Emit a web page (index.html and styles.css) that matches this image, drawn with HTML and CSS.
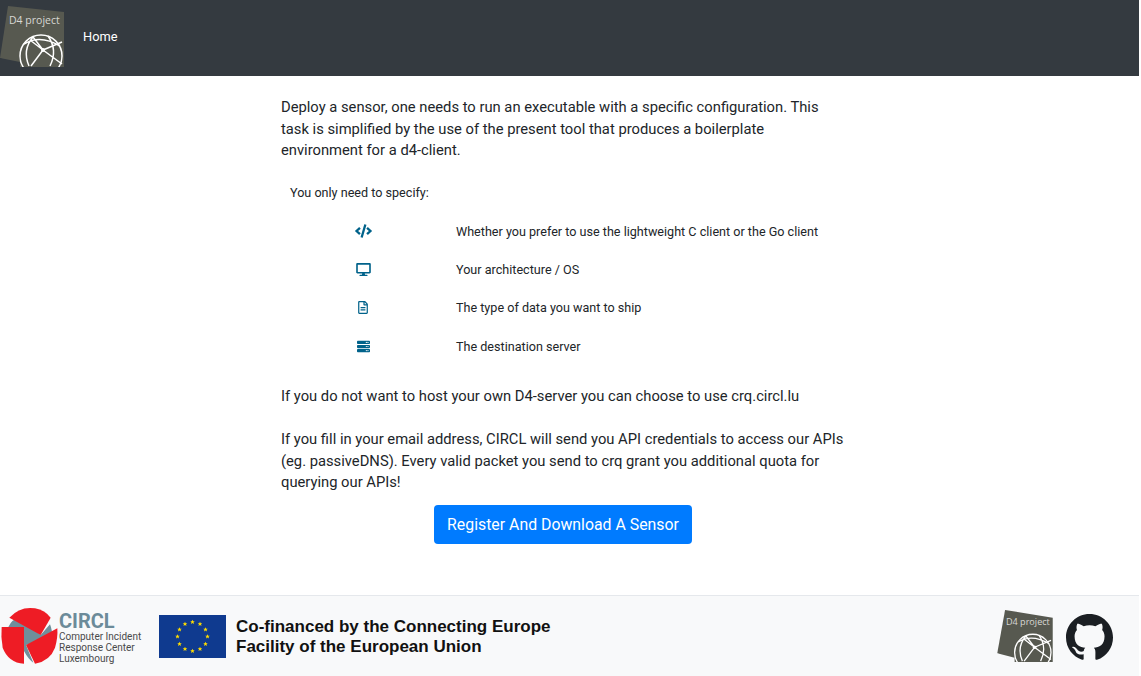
FILE: index.html
```html
<!DOCTYPE html>
<html>
<head>
    <title>D4 project</title>
    <link rel="stylesheet" href="styles.css">
</head>
<body>
    <nav class="navbar">
        <svg class="d4-logo" viewBox="0 0 64 67" width="64" height="67">
            <polygon points="8,6 64,12 64,67 20,67 0,58" fill="#575950"/>
            <polygon points="0,58 20,62 20,67 0,67" fill="#343a40"/>
            <text x="9" y="24" class="d4-text">D4 project</text>
            <g class="globe">
                <circle cx="41" cy="56" r="21"/>
                <path d="M33 37 Q22 50 29 66 M48 36 Q58 50 50 66 M24 44 Q40 34 60 46 M33 37 L43 50 L62 64 M43 50 L62 42 M43 50 L31 66 M43 50 L30 40"/>
            </g>
            <circle cx="43" cy="50" r="2" fill="#fff"/>
        </svg>
        <a class="nav-link" href="#">Home</a>
    </nav>

    <main class="content">
        <div class="column">
            <p class="lead">Deploy a sensor, one needs to run an executable with a specific configuration. This task is simplified by the use of the present tool that produces a boilerplate environment for a d4-client.</p>
            <p class="specify">You only need to specify:</p>
            <div class="features">
                <div class="feature">
                    <svg class="icon" viewBox="0 0 640 512" width="17" height="14"><path d="M278.9 511.5l-61-17.7c-6.4-1.8-10-8.5-8.2-14.9L346.2 8.7c1.8-6.4 8.5-10 14.9-8.2l61 17.7c6.4 1.8 10 8.5 8.2 14.9L293.8 503.3c-1.9 6.4-8.5 10.1-14.9 8.2zm-114-112.2l43.5-46.4c4.6-4.9 4.3-12.7-.8-17.2L117 256l90.6-79.7c5.1-4.5 5.5-12.3.8-17.2l-43.5-46.4c-4.5-4.8-12.1-5.1-17-.5L3.8 247.2c-5.1 4.7-5.1 12.8 0 17.5l144.1 135.1c4.9 4.6 12.5 4.4 17-.5zm327.2.6l144.1-135.1c5.1-4.7 5.1-12.8 0-17.5L492.1 112.1c-4.8-4.5-12.4-4.3-17 .5L431.6 159c-4.6 4.9-4.3 12.7.8 17.2L523 256l-90.6 79.7c-5.1 4.5-5.5 12.3-.8 17.2l43.5 46.4c4.5 4.9 12.1 5.1 17 .6z"/></svg>
                    <span>Whether you prefer to use the lightweight C client or the Go client</span>
                </div>
                <div class="feature">
                    <svg class="icon" viewBox="0 0 576 512" width="15" height="13"><path d="M528 0H48C21.5 0 0 21.5 0 48v320c0 26.5 21.5 48 48 48h192l-16 48h-72c-13.3 0-24 10.7-24 24s10.7 24 24 24h272c13.3 0 24-10.7 24-24s-10.7-24-24-24h-72l-16-48h192c26.5 0 48-21.5 48-48V48c0-26.5-21.5-48-48-48zm-16 352H64V64h448v288z"/></svg>
                    <span>Your architecture / OS</span>
                </div>
                <div class="feature">
                    <svg class="icon" viewBox="0 0 384 512" width="10" height="13"><path d="M288 248v28c0 6.6-5.4 12-12 12H108c-6.6 0-12-5.4-12-12v-28c0-6.6 5.4-12 12-12h168c6.6 0 12 5.4 12 12zm-12 72H108c-6.6 0-12 5.4-12 12v28c0 6.6 5.4 12 12 12h168c6.6 0 12-5.4 12-12v-28c0-6.6-5.4-12-12-12zm108-188.1V464c0 26.5-21.5 48-48 48H48c-26.5 0-48-21.5-48-48V48C0 21.5 21.5 0 48 0h204.1C264.8 0 277 5.1 286 14.1L369.9 98c9 8.9 14.1 21.2 14.1 33.9zm-128-80V128h76.1L256 51.9zM336 464V176H232c-13.3 0-24-10.7-24-24V48H48v416h288z"/></svg>
                    <span>The type of data you want to ship</span>
                </div>
                <div class="feature">
                    <svg class="icon" viewBox="0 0 512 512" width="13" height="13"><path d="M480 160H32c-17.673 0-32-14.327-32-32V64c0-17.673 14.327-32 32-32h448c17.673 0 32 14.327 32 32v64c0 17.673-14.327 32-32 32zm-48-88c-13.255 0-24 10.745-24 24s10.745 24 24 24 24-10.745 24-24-10.745-24-24-24zm-64 0c-13.255 0-24 10.745-24 24s10.745 24 24 24 24-10.745 24-24-10.745-24-24-24zm112 248H32c-17.673 0-32-14.327-32-32v-64c0-17.673 14.327-32 32-32h448c17.673 0 32 14.327 32 32v64c0 17.673-14.327 32-32 32zm-48-88c-13.255 0-24 10.745-24 24s10.745 24 24 24 24-10.745 24-24-10.745-24-24-24zm-64 0c-13.255 0-24 10.745-24 24s10.745 24 24 24 24-10.745 24-24-10.745-24-24-24zm112 248H32c-17.673 0-32-14.327-32-32v-64c0-17.673 14.327-32 32-32h448c17.673 0 32 14.327 32 32v64c0 17.673-14.327 32-32 32zm-48-88c-13.255 0-24 10.745-24 24s10.745 24 24 24 24-10.745 24-24-10.745-24-24-24zm-64 0c-13.255 0-24 10.745-24 24s10.745 24 24 24 24-10.745 24-24-10.745-24-24-24z"/></svg>
                    <span>The destination server</span>
                </div>
            </div>
            <p class="lead">If you do not want to host your own D4-server you can choose to use crq.circl.lu</p>
            <p class="lead last">If you fill in your email address, CIRCL will send you API credentials to access our APIs (eg. passiveDNS). Every valid packet you send to crq grant you additional quota for querying our APIs!</p>
            <div class="actions">
                <a class="btn" href="#">Register And Download A Sensor</a>
            </div>
        </div>
    </main>

    <footer class="footer">
        <div class="circl">
            <svg class="circl-mark" viewBox="0 35 180 180" width="60" height="60">
                <path fill="#6f8f9b" d="M25 98 Q35 75 60 68 L122 122 L150 90 Q158 110 155 125 L78 152 L100 205 Q85 195 72 170 L72 98 Z"/>
                <path fill="#ee1c25" d="M28 70 Q60 35 105 42 Q135 48 152 70 L122 122 Z"/>
                <path fill="#ee1c25" d="M5 98 L72 98 L72 208 Q25 205 8 160 Q2 130 5 98 Z"/>
                <path fill="#ee1c25" d="M172 102 L78 152 L105 208 Q150 200 165 160 Q174 130 172 102 Z"/>
            </svg>
            <div class="circl-text">
                <div class="circl-name">CIRCL</div>
                <div>Computer Incident</div>
                <div>Response Center</div>
                <div>Luxembourg</div>
            </div>
        </div>
        <svg class="eu-flag" viewBox="0 0 67 43" width="67" height="43">
            <defs>
                <polygon id="star" points="0,-2.3 .7,-.7 2.3,-.7 1.05,.35 1.5,1.95 0,1 -1.5,1.95 -1.05,.35 -2.3,-.7 -.7,-.7" fill="#ffdd00"/>
            </defs>
            <rect width="67" height="43" fill="#0f3a8f"/>
            <use href="#star" x="33.5" y="7"/>
            <use href="#star" x="41" y="9"/>
            <use href="#star" x="46.5" y="14.5"/>
            <use href="#star" x="48.5" y="21.5"/>
            <use href="#star" x="46.5" y="29"/>
            <use href="#star" x="41" y="34"/>
            <use href="#star" x="33.5" y="36"/>
            <use href="#star" x="26" y="34"/>
            <use href="#star" x="20.5" y="29"/>
            <use href="#star" x="18.5" y="21.5"/>
            <use href="#star" x="20.5" y="14.5"/>
            <use href="#star" x="26" y="9"/>
        </svg>
        <div class="cofinanced">Co-financed by the Connecting Europe<br>Facility of the European Union</div>
        <svg class="d4-logo-small" viewBox="0 0 64 60" width="56" height="52">
            <polygon points="9,0 64,9 64,60 20,60 0,50" fill="#575950"/>
            <polygon points="0,50 20,55 20,60 0,60" fill="#f8f9fa"/>
            <text x="10" y="17" class="d4-text">D4 project</text>
            <g class="globe">
                <circle cx="41" cy="49" r="21"/>
                <path d="M33 30 Q22 43 29 59 M48 29 Q58 43 50 59 M24 37 Q40 27 60 39 M33 30 L43 43 L62 57 M43 43 L62 35 M43 43 L31 59 M43 43 L30 33"/>
            </g>
            <circle cx="43" cy="43" r="2" fill="#fff"/>
        </svg>
        <svg class="github" viewBox="0 0 16 16" width="47" height="47"><path d="M8 0C3.58 0 0 3.58 0 8c0 3.54 2.29 6.53 5.47 7.59.4.07.55-.17.55-.38 0-.19-.01-.82-.01-1.49-2.01.37-2.53-.49-2.69-.94-.09-.23-.48-.94-.82-1.13-.28-.15-.68-.52-.01-.53.63-.01 1.08.58 1.23.82.72 1.21 1.87.87 2.33.66.07-.52.28-.87.51-1.07-1.78-.2-3.64-.89-3.64-3.95 0-.87.31-1.59.82-2.15-.08-.2-.36-1.02.08-2.12 0 0 .67-.21 2.2.82.64-.18 1.32-.27 2-.27.68 0 1.36.09 2 .27 1.53-1.04 2.2-.82 2.2-.82.44 1.1.16 1.92.08 2.12.51.56.82 1.27.82 2.15 0 3.07-1.87 3.75-3.65 3.95.29.25.54.73.54 1.48 0 1.07-.01 1.93-.01 2.2 0 .21.15.46.55.38A8.013 8.013 0 0016 8c0-4.42-3.58-8-8-8z"/></svg>
    </footer>
</body>
</html>
```

FILE: styles.css
```css
body {
    width: 1139px;
    margin: 0;
    font-family: Roboto, "Liberation Sans", sans-serif;
    color: #212529;
    background-color: #fff;
    overflow: hidden;
}
.navbar {
    display: flex;
    align-items: flex-start;
    height: 76px;
    background-color: #343a40;
}
.d4-logo {
    flex: none;
}
.d4-text {
    font-family: "Open Sans", sans-serif;
    font-size: 10.5px;
    fill: #d8d8d4;
}
.globe {
    fill: none;
    stroke: #fff;
    stroke-width: 1.5;
}
.nav-link {
    margin: 27px 0 0 19px;
    color: #fff;
    font-size: 12.8px;
    line-height: 19px;
    text-decoration: none;
}
.content {
    height: 519px;
    padding: 21px 0 0 281px;
    box-sizing: border-box;
}
.column {
    width: 564px;
}
.lead {
    margin: 0 0 21.5px;
    font-size: 14.75px;
    line-height: 21.5px;
}
.lead.last {
    margin-top: 22px;
    margin-bottom: 11px;
}
.specify {
    margin: 0 0 0 9px;
    font-size: 12.6px;
    line-height: 19px;
}
.features {
    margin: 10.2px 0 20.3px;
}
.feature {
    display: grid;
    grid-template-columns: 164px 1fr;
    align-items: center;
    height: 38.3px;
    padding-left: 11px;
    font-size: 12.6px;
}
.icon {
    justify-self: center;
    margin-left: -22px;
    fill: #00628a;
}
.actions {
    display: flex;
    justify-content: center;
}
.btn {
    padding: 9px 13.5px;
    color: #fff;
    background-color: #007bff;
    border-radius: 4px;
    font-size: 15.85px;
    line-height: 21px;
    text-decoration: none;
}
.footer {
    display: flex;
    align-items: center;
    height: 81px;
    box-sizing: border-box;
    border-top: 1px solid #e5e8ec;
    background-color: #f8f9fa;
}
.circl {
    display: flex;
    align-items: center;
    width: 159px;
    flex: none;
}
.circl-mark {
    flex: none;
}
.circl-text {
    margin: 2px 0 0 -1px;
    color: #4a4a4a;
    font-size: 10px;
    line-height: 11px;
}
.circl-name {
    color: #6c8b99;
    font-size: 20px;
    font-weight: 700;
    line-height: 20px;
}
.eu-flag {
    flex: none;
}
.cofinanced {
    margin: 2px 0 0 10px;
    color: #111;
    font-family: "Liberation Sans", sans-serif;
    font-size: 17px;
    font-weight: 700;
    line-height: 20px;
}
.d4-logo-small {
    margin-left: auto;
    flex: none;
}
.github {
    margin: 2px 26px 0 13px;
    flex: none;
    fill: #1b1f23;
}
```
